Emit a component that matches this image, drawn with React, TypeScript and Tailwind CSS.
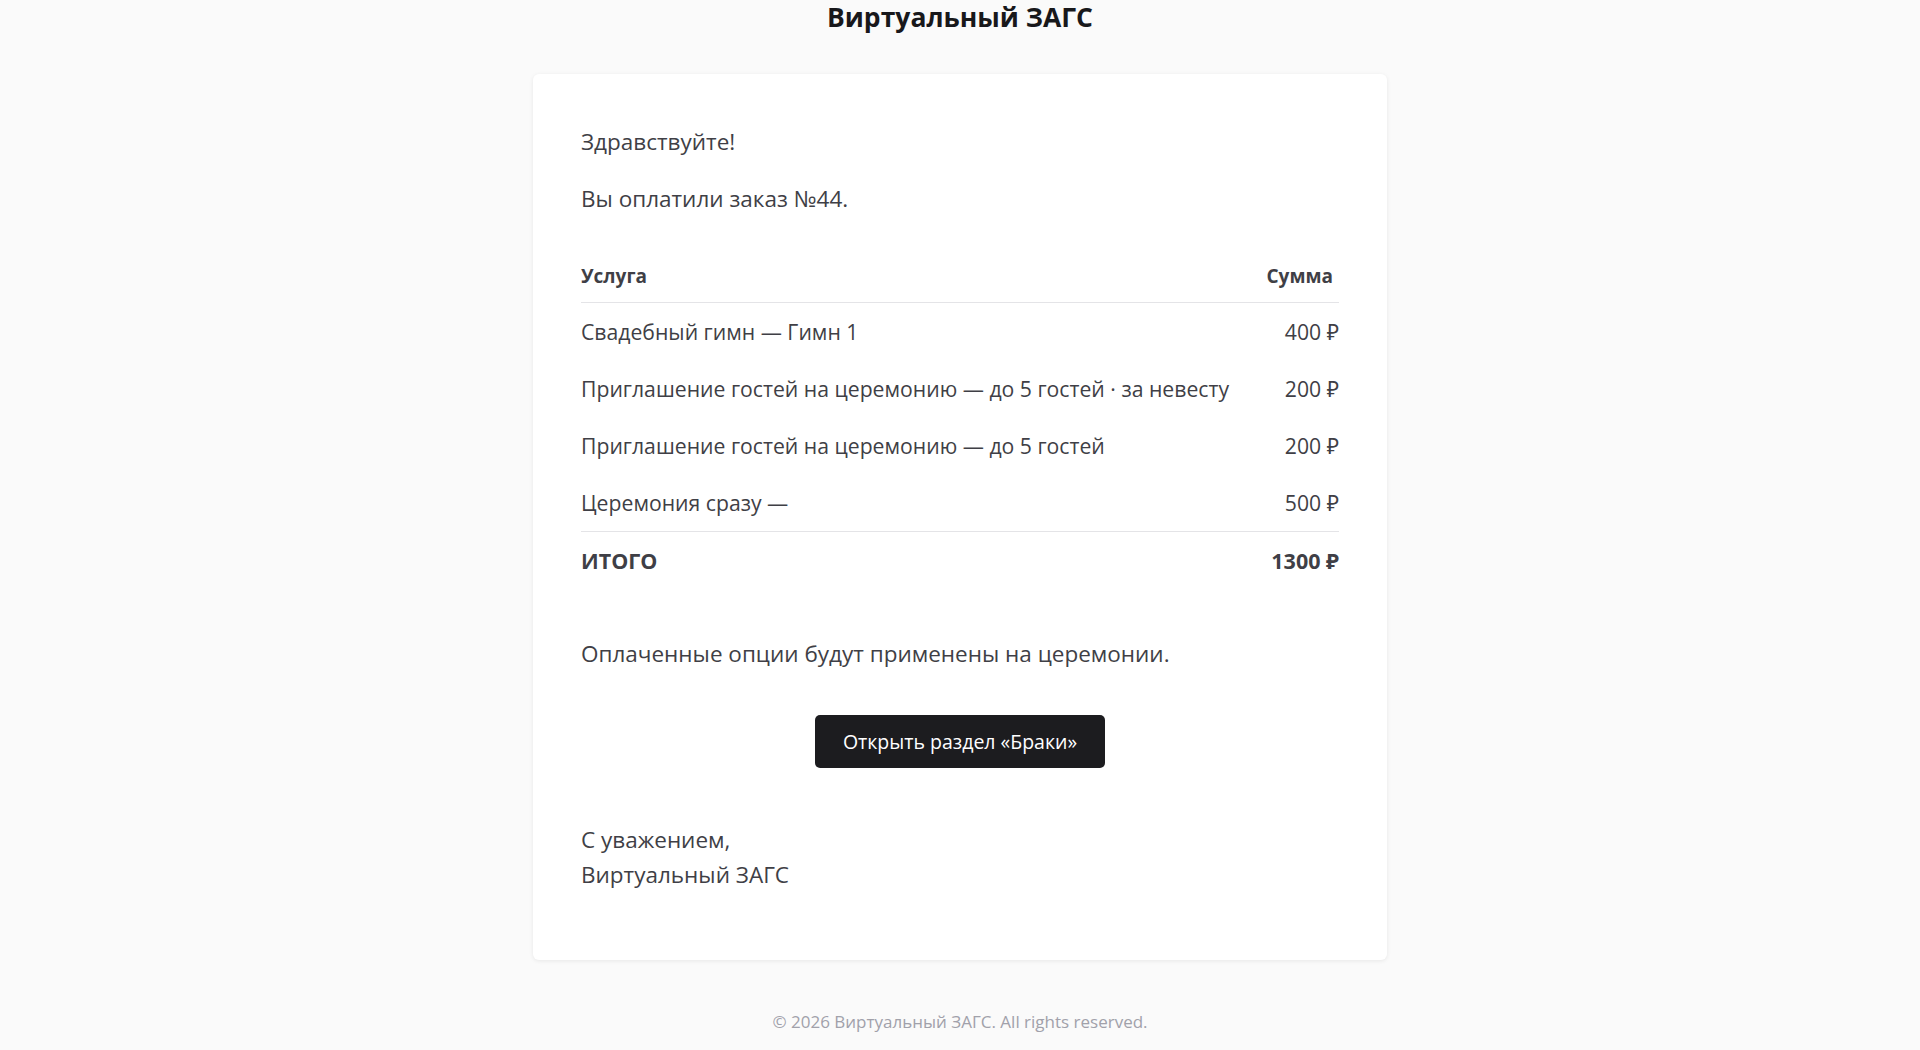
import React from "react";

const rows = [
  { name: "Свадебный гимн — Гимн 1", sum: "400 ₽" },
  { name: "Приглашение гостей на церемонию — до 5 гостей · за невесту", sum: "200 ₽" },
  { name: "Приглашение гостей на церемонию — до 5 гостей", sum: "200 ₽" },
  { name: "Церемония сразу —", sum: "500 ₽" },
];

export default function App() {
  return (
    <div className="min-h-screen bg-[#fafafa] font-['Open_Sans','Noto_Sans',sans-serif] text-[#3f3f46]">
      <h1 className="text-center text-[26.5px] leading-[34px] font-bold text-[#18181b]">Виртуальный ЗАГС</h1>
      <div className="mx-auto mt-[40px] w-[854px] rounded-md bg-white px-12 pt-[51px] pb-[68px] shadow-[0_1px_4px_rgba(0,0,0,0.08)]">
        <p className="text-[22.5px] leading-[33px]">Здравствуйте!</p>
        <p className="mt-6 text-[22.5px] leading-[33px]">Вы оплатили заказ №44.</p>
        <div className="mt-[35px]">
          <div className="flex items-center justify-between border-b border-[#e4e4e7] py-3 text-[19px] leading-[28px] font-bold">
            <span>Услуга</span>
            <span className="pr-[6px]">Сумма</span>
          </div>
          {rows.map((r, i) => (
            <div key={i} className="flex items-center justify-between py-3 text-[21.2px] leading-[33px]">
              <span>{r.name}</span>
              <span className="whitespace-nowrap pl-6">{r.sum}</span>
            </div>
          ))}
          <div className="flex items-center justify-between border-t border-[#e4e4e7] py-3 text-[21.5px] leading-[33px] font-bold">
            <span>ИТОГО</span>
            <span>1300 ₽</span>
          </div>
        </div>
        <p className="mt-[48px] text-[22.5px] leading-[33px]">Оплаченные опции будут применены на церемонии.</p>
        <div className="mt-[45px] flex justify-center">
          <button className="h-[53px] rounded-[5px] bg-[#1c1c1f] px-[28px] text-[19.5px] text-white">
            Открыть раздел «Браки»
          </button>
        </div>
        <p className="mt-[54px] text-[22.5px] leading-[35px]">
          С уважением,
          <br />
          Виртуальный ЗАГС
        </p>
      </div>
      <p className="mt-[50px] pb-4 text-center text-[17px] leading-[24px] text-[#a1a1aa]">
        © 2026 Виртуальный ЗАГС. All rights reserved.
      </p>
    </div>
  );
}
